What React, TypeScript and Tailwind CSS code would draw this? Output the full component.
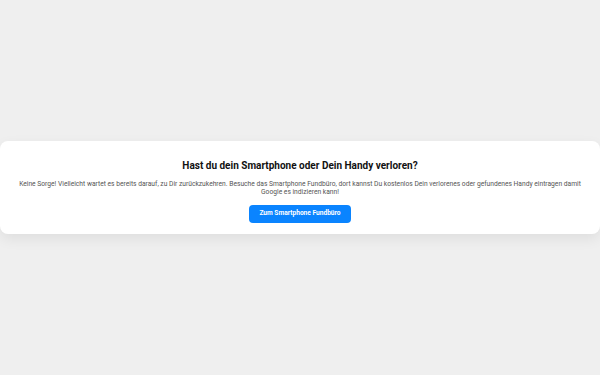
export default function App() {
  return (
    <div className="min-h-screen w-full bg-[#efefef] flex items-center justify-center font-['Roboto',sans-serif]">
      <div className="w-full bg-white rounded-lg shadow-[0_5px_14px_rgba(0,0,0,0.07)] px-4 pt-[18px] pb-[11px] text-center">
        <h2 className="text-[10px] font-bold text-[#111] leading-[14px]">
          Hast du dein Smartphone oder Dein Handy verloren?
        </h2>
        <p className="mt-[7px] text-[6.7px] leading-[8px] text-[#555]">
          Keine Sorge! Vielleicht wartet es bereits darauf, zu Dir zurückzukehren. Besuche das Smartphone Fundbüro, dort kannst Du kostenlos Dein verlorenes oder gefundenes Handy eintragen damit Google es indizieren kann!
        </p>
        <button className="mt-[9px] h-[18px] w-[102px] rounded-[4px] bg-[#0a84ff] text-white text-[6.6px] font-bold">
          Zum Smartphone Fundbüro
        </button>
      </div>
    </div>
  )
}
